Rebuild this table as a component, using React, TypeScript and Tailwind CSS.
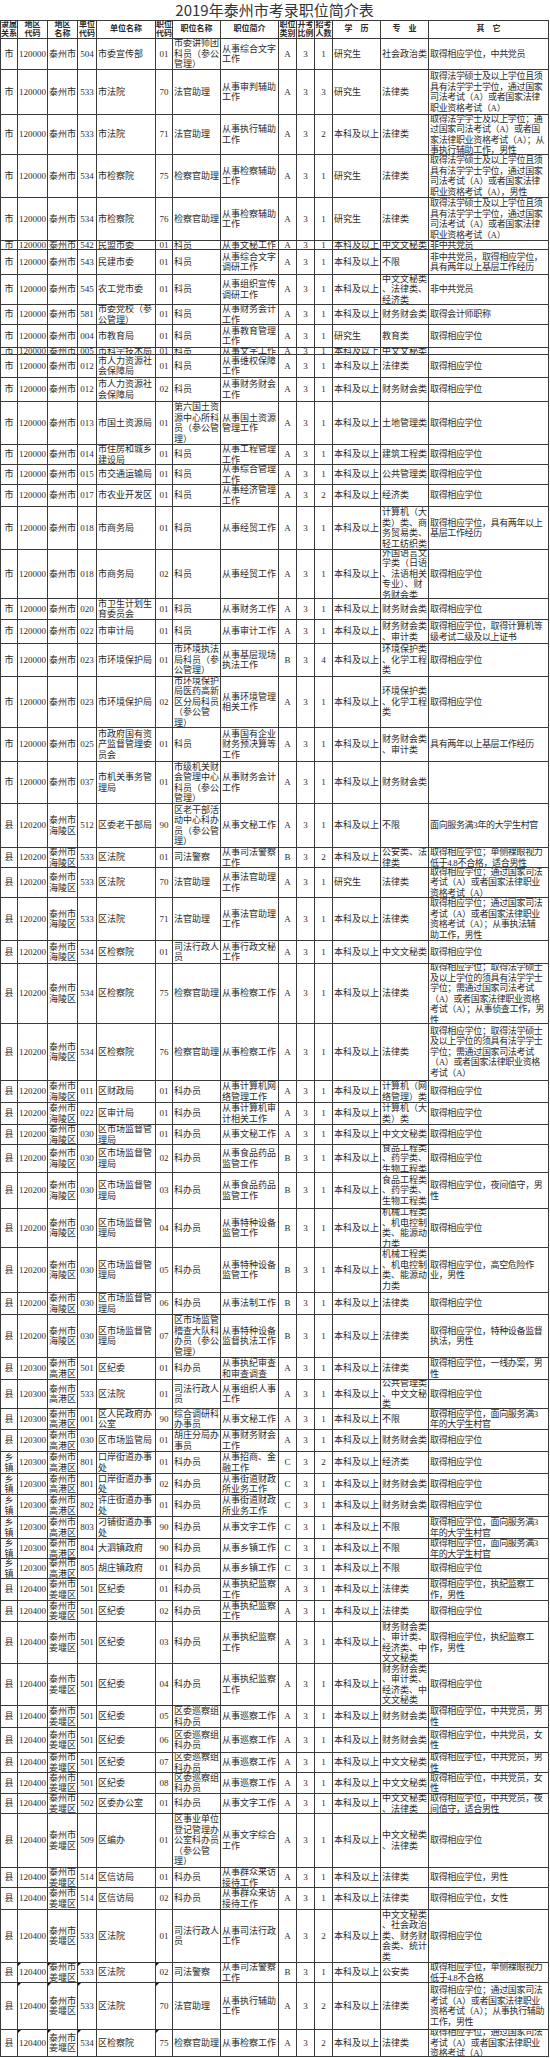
import React from "react";

const DATA = `31|市|120000|泰州市|504|市委宣传部|01|市委讲师团/科员（参公/管理）|从事综合文字/工作|A|3|1|研究生|社会政治类|取得相应学位，中共党员
45|市|120000|泰州市|533|市法院|70|法官助理|从事审判辅助/工作|A|3|3|研究生|法律类|取得法学硕士及以上学位且须/具有法学学士学位，通过国家/司法考试（A）或者国家法律/职业资格考试（A）
40|市|120000|泰州市|533|市法院|71|法官助理|从事执行辅助/工作|A|3|2|本科及以上|法律类|取得法学学士及以上学位；通/过国家司法考试（A）或者国/家法律职业资格考试（A）；从/事执行辅助工作，男性
43|市|120000|泰州市|534|市检察院|75|检察官助理|从事检察辅助/工作|A|3|1|研究生|法律类|取得法学硕士及以上学位且须/具有法学学士学位，通过国家/司法考试（A）或者国家法律/职业资格考试（A），男性
43|市|120000|泰州市|534|市检察院|76|检察官助理|从事检察辅助/工作|A|3|1|研究生|法律类|取得法学硕士及以上学位且须/具有法学学士学位，通过国家/司法考试（A）或者国家法律/职业资格考试（A）
9|市|120000|泰州市|542|民盟市委|01|科员|从事文秘工作|A|3|1|本科及以上|中文文秘类|非中共党员
25|市|120000|泰州市|543|民建市委|01|科员|从事综合文字/调研工作|A|3|1|本科及以上|不限|非中共党员，取得相应学位，/具有两年以上基层工作经历
30|市|120000|泰州市|545|农工党市委|01|科员|从事组织宣传/调研工作|A|3|1|本科及以上|中文文秘类/、法律类、/经济类|非中共党员
20|市|120000|泰州市|581|市委党校（参/公管理）|01|科员|从事财务会计/工作|A|3|1|本科及以上|财务财会类|取得会计师职称
23|市|120000|泰州市|004|市教育局|01|科员|从事教育管理/工作|A|3|1|研究生|教育类|取得相应学位
7|市|120000|泰州市|005|市科学技术局|01|科员|从事文字工作|A|3|1|本科及以上|中文文秘类|
23|市|120000|泰州市|012|市人力资源社/会保障局|01|科员|从事维权保障/工作|A|3|1|本科及以上|法律类|取得相应学位
24|市|120000|泰州市|012|市人力资源社/会保障局|02|科员|从事财务财会/工作|A|3|1|本科及以上|财务财会类|取得相应学位
43|市|120000|泰州市|013|市国土资源局|01|第六国土资/源中心所科/员（参公管/理）|从事国土资源/管理工作|A|3|1|本科及以上|土地管理类|取得相应学位
20|市|120000|泰州市|014|市住房和城乡/建设局|01|科员|从事工程管理/工作|A|3|1|本科及以上|建筑工程类|取得相应学位
20|市|120000|泰州市|015|市交通运输局|01|科员|从事综合管理/工作|A|3|1|本科及以上|公共管理类|取得相应学位
22|市|120000|泰州市|017|市农业开发区|01|科员|从事经济管理/工作|A|3|2|本科及以上|经济类|取得相应学位
43|市|120000|泰州市|018|市商务局|01|科员|从事经贸工作|A|3|1|本科及以上|计算机（大/类）类、商/务贸易类、/轻工纺织类|取得相应学位，具有两年以上/基层工作经历
49|市|120000|泰州市|018|市商务局|02|科员|从事经贸工作|A|3|1|本科及以上|外国语言文/学类（日语/、法语相关/专业）、财/务财会类|取得相应学位
21|市|120000|泰州市|020|市卫生计划生/育委员会|01|科员|从事财务工作|A|3|1|本科及以上|财务财会类|取得相应学位
24|市|120000|泰州市|022|市审计局|01|科员|从事审计工作|A|3|1|本科及以上|财务财会类/、审计类|取得相应学位，取得计算机等/级考试二级及以上证书
33|市|120000|泰州市|023|市环境保护局|01|市环境执法/局科员（参/公管理）|从事基层现场/执法工作|B|3|4|本科及以上|环境保护类/、化学工程/类|取得相应学位
51|市|120000|泰州市|023|市环境保护局|02|市环境保护/局医药高新/区分局科员/（参公管/理）|从事环境管理/相关工作|A|3|1|本科及以上|环境保护类/、化学工程/类|取得相应学位
34|市|120000|泰州市|025|市政府国有资/产监督管理委/员会|01|科员|从事国有企业/财务预决算等/工作|A|3|1|本科及以上|财务财会类/、审计类|具有两年以上基层工作经历
42|市|120000|泰州市|037|市机关事务管/理局|01|市级机关财/会管理中心/科员（参公/管理）|从事财务会计/工作|A|3|1|本科及以上|财务财会类|
44|县|120200|泰州市/海陵区|512|区委老干部局|90|区老干部活/动中心科办/员（参公管/理）|从事文秘工作|A|3|1|本科及以上|不限|面向服务满3年的大学生村官
20|县|120200|泰州市/海陵区|533|区法院|01|司法警察|从事司法警察/工作|B|3|2|本科及以上|公安类、法/律类|取得相应学位；单侧裸眼视力/低于4.8不合格，适合男性
30|县|120200|泰州市/海陵区|533|区法院|70|法官助理|从事法官助理/工作|A|3|1|研究生|法律类|取得相应学位；通过国家司法/考试（A）或者国家法律职业/资格考试（A）
43|县|120200|泰州市/海陵区|533|区法院|71|法官助理|从事法官助理/工作|A|3|1|本科及以上|法律类|取得相应学位；通过国家司法/考试（A）或者国家法律职业/资格考试（A）；从事执法辅/助工作，男性
23|县|120200|泰州市/海陵区|534|区检察院|01|司法行政人/员|从事行政文秘/工作|A|3|1|本科及以上|中文文秘类|取得相应学位
60|县|120200|泰州市/海陵区|534|区检察院|75|检察官助理|从事检察工作|A|3|1|本科及以上|法律类|取得相应学位；取得法学硕士/及以上学位的须具有法学学士/学位；需通过国家司法考试/（A）或者国家法律职业资格/考试（A）；从事侦查工作，男/性
57|县|120200|泰州市/海陵区|534|区检察院|76|检察官助理|从事检察工作|A|3|1|本科及以上|法律类|取得相应学位；取得法学硕士/及以上学位的须具有法学学士/学位；需通过国家司法考试/（A）或者国家法律职业资格/考试（A）
22|县|120200|泰州市/海陵区|011|区财政局|01|科办员|从事计算机网/络管理工作|A|3|1|本科及以上|计算机（网/络管理）类|取得相应学位
22|县|120200|泰州市/海陵区|022|区审计局|01|科办员|从事计算机审/计相关工作|A|3|1|本科及以上|计算机（大/类）类|取得相应学位
20|县|120200|泰州市/海陵区|030|区市场监督管/理局|01|科办员|从事文秘工作|A|3|1|本科及以上|中文文秘类|取得相应学位
28|县|120200|泰州市/海陵区|030|区市场监督管/理局|02|科办员|从事食品药品/监管工作|B|3|1|本科及以上|食品工程类/、药学类、/生物工程类|取得相应学位
36|县|120200|泰州市/海陵区|030|区市场监督管/理局|03|科办员|从事食品药品/监管工作|B|3|1|本科及以上|食品工程类/、药学类、/生物工程类|取得相应学位，夜间值守，男/性
39|县|120200|泰州市/海陵区|030|区市场监督管/理局|04|科办员|从事特种设备/监管工作|B|3|1|本科及以上|机械工程类/、机电控制/类、能源动/力类|取得相应学位
45|县|120200|泰州市/海陵区|030|区市场监督管/理局|05|科办员|从事特种设备/监管工作|B|3|1|本科及以上|机械工程类/、机电控制/类、能源动/力类|取得相应学位，高空危险作/业，男性
22|县|120200|泰州市/海陵区|030|区市场监督管/理局|06|科办员|从事法制工作|B|3|1|本科及以上|法律类|取得相应学位
43|县|120200|泰州市/海陵区|030|区市场监督管/理局|07|区市场监管/稽查大队科/办员（参公/管理）|从事特种设备/监督执法工作|B|3|1|本科及以上|法律类|取得相应学位，特种设备监督/执法，男性
22|县|120300|泰州市/高港区|501|区纪委|01|科办员|从事执纪审查/和审查调查|A|3|1|本科及以上|法律类|取得相应学位，一线办案，男/性
29|县|120300|泰州市/高港区|533|区法院|01|司法行政人/员|从事组织人事/工作|A|3|1|本科及以上|公共管理类/、中文文秘/类|取得相应学位
21|县|120300|泰州市/高港区|001|区人民政府办/公室|90|综合调研科/办事员|从事文秘工作|A|3|1|本科及以上|不限|取得相应学位，面向服务满3/年的大学生村官
22|县|120300|泰州市/高港区|030|区市场监管局|01|胡庄分局办/事员|从事财务财会/工作|A|3|1|本科及以上|财务财会类|取得相应学位
22|乡/镇|120300|泰州市/高港区|801|口岸街道办事/处|01|科办员|从事招商、金/融工作|C|3|2|本科及以上|经济类|取得相应学位
21|乡/镇|120300|泰州市/高港区|801|口岸街道办事/处|02|科办员|从事街道财政/所业务工作|C|3|1|本科及以上|财务财会类|取得相应学位
22|乡/镇|120300|泰州市/高港区|802|许庄街道办事/处|01|科办员|从事街道财政/所业务工作|C|3|1|本科及以上|财务财会类|取得相应学位
22|乡/镇|120300|泰州市/高港区|803|刁铺街道办事/处|90|科办员|从事文字工作|C|3|1|本科及以上|不限|取得相应学位，面向服务满3/年的大学生村官
20|乡/镇|120300|泰州市/高港区|804|大泗镇政府|90|科办员|从事乡镇工作|C|3|1|本科及以上|不限|取得相应学位，面向服务满3/年的大学生村官
20|乡/镇|120300|泰州市/高港区|805|胡庄镇政府|01|科办员|从事乡镇工作|C|3|1|本科及以上|不限|取得相应学位
22|县|120400|泰州市/姜堰区|501|区纪委|01|科办员|从事执纪监察/工作|A|3|1|本科及以上|法律类|取得相应学位，执纪监察工/作，男性
21|县|120400|泰州市/姜堰区|501|区纪委|02|科办员|从事执纪监察/工作|A|3|1|本科及以上|法律类|取得相应学位
42|县|120400|泰州市/姜堰区|501|区纪委|03|科办员|从事执纪监察/工作|A|3|1|本科及以上|财务财会类/、审计类、/经济类、中/文文秘类|取得相应学位，执纪监察工/作，男性
42|县|120400|泰州市/姜堰区|501|区纪委|04|科办员|从事执纪监察/工作|A|3|1|本科及以上|财务财会类/、审计类、/经济类、中/文文秘类|取得相应学位
22|县|120400|泰州市/姜堰区|501|区纪委|05|区委巡察组/科办员|从事巡察工作|A|3|1|本科及以上|财务财会类|取得相应学位，中共党员，男/性
25|县|120400|泰州市/姜堰区|501|区纪委|06|区委巡察组/科办员|从事巡察工作|A|3|1|本科及以上|财务财会类|取得相应学位，中共党员，女/性
20|县|120400|泰州市/姜堰区|501|区纪委|07|区委巡察组/科办员|从事巡察工作|A|3|1|本科及以上|中文文秘类|取得相应学位，中共党员，男/性
21|县|120400|泰州市/姜堰区|501|区纪委|08|区委巡察组/科办员|从事巡察工作|A|3|1|本科及以上|中文文秘类|取得相应学位，中共党员，女/性
20|县|120400|泰州市/姜堰区|502|区委办公室|01|科办员|从事文字工作|A|3|1|本科及以上|中文文秘类/、法律类|取得相应学位，中共党员，夜/间值守，适合男性
54|县|120400|泰州市/姜堰区|509|区编办|01|区事业单位/登记管理办/公室科办员/（参公管/理）|从事文字综合/工作|A|3|1|本科及以上|中文文秘类/、法律类|取得相应学位
20|县|120400|泰州市/姜堰区|514|区信访局|01|科办员|从事群众来访/接待工作|A|3|1|本科及以上|法律类|取得相应学位，男性
22|县|120400|泰州市/姜堰区|514|区信访局|02|科办员|从事群众来访/接待工作|A|3|1|本科及以上|法律类|取得相应学位，女性
53|县|120400|泰州市/姜堰区|533|区法院|01|司法行政人/员|从事司法行政/工作|A|3|2|本科及以上|中文文秘类/、社会政治/类、财务财/会类、统计/类|取得相应学位
20|县|^120400|^泰州市/姜堰区|^533|区法院|^02|司法警察|从事司法警察/工作|B|3|1|本科及以上|公安类|取得相应学位，单侧裸眼视力/低于4.8不合格
47|县|^120400|^泰州市/姜堰区|^533|区法院|^70|法官助理|从事执行辅助/工作|A|3|2|本科及以上|法律类|取得相应学位；通过国家司法/考试（A）或者国家法律职业/资格考试（A）；从事执行辅助/工作，男性
27|县|^120400|^泰州市/姜堰区|^534|区检察院|^75|检察官助理|从事检察工作|A|3|2|本科及以上|法律类|取得相应学位，通过国家司法/考试（A）或者国家法律职业/资格考试（A）`;

type Row = { h: number; cells: string[] };

const ROWS: Row[] = DATA.split("\n").map((line) => {
  const parts = line.split("|");
  return { h: Number(parts[0]), cells: parts.slice(1) };
});

const HEADERS = [
  "隶属\n关系",
  "地区\n代码",
  "地区\n名称",
  "单位\n代码",
  "单位名称",
  "职位\n代码",
  "职位名称",
  "职位简介",
  "职位\n类别",
  "开考\n比例",
  "招考\n人数",
  "学　历",
  "专　业",
  "其　它",
];

const CENTER = [true, true, false, true, false, true, false, false, true, true, true, false, false, false];

const GRID =
  "grid grid-cols-[17px_30px_30px_19px_59px_17px_48px_58px_18px_18px_18px_48px_48px_120px]";

function Cell({ text, center, last }: { text: string; center: boolean; last: boolean }) {
  const mark = text.startsWith("^");
  const t = (mark ? text.slice(1) : text).split("/").join("\n");
  return (
    <div
      className={
        "relative flex items-center overflow-hidden border-r border-[#3a3a3a] px-[1px] whitespace-pre " +
        (center ? "justify-center text-center" : "justify-start text-left") +
        (last ? " tracking-[-0.35px]" : "")
      }
    >
      {mark && (
        <span className="absolute left-0 top-0 h-0 w-0 border-r-[3px] border-t-[3px] border-r-transparent border-t-[#111]" />
      )}
      <span>{t}</span>
    </div>
  );
}

export default function App() {
  return (
    <div className="w-[550px] min-h-[2058px] bg-white text-[#2b2b2b]">
      <div className="w-[549px]">
        <div className="flex h-[20px] items-center justify-center font-['Noto_Sans_CJK_SC',sans-serif] text-[15px] leading-[20px] text-[#333]">
          2019年泰州市考录职位简介表
        </div>
        <div className="border-l border-t border-[#3a3a3a] font-['Liberation_Serif','Noto_Sans_CJK_SC',serif]">
          <div className={GRID + " h-[18px] border-b border-[#3a3a3a] text-[8px] font-bold leading-[8.5px]"}>
            {HEADERS.map((h, i) => (
              <div
                key={i}
                className="flex items-center justify-center overflow-hidden whitespace-pre border-r border-[#3a3a3a] text-center"
              >
                {h}
              </div>
            ))}
          </div>
          {ROWS.map((r, ri) => (
            <div
              key={ri}
              className={GRID + " border-b border-[#3a3a3a] text-[9px] leading-[10.5px]"}
              style={{ height: r.h }}
            >
              {Array.from({ length: 14 }).map((_, ci) => (
                <Cell key={ci} text={r.cells[ci] ?? ""} center={CENTER[ci]} last={ci === 13} />
              ))}
            </div>
          ))}
        </div>
      </div>
    </div>
  );
}
